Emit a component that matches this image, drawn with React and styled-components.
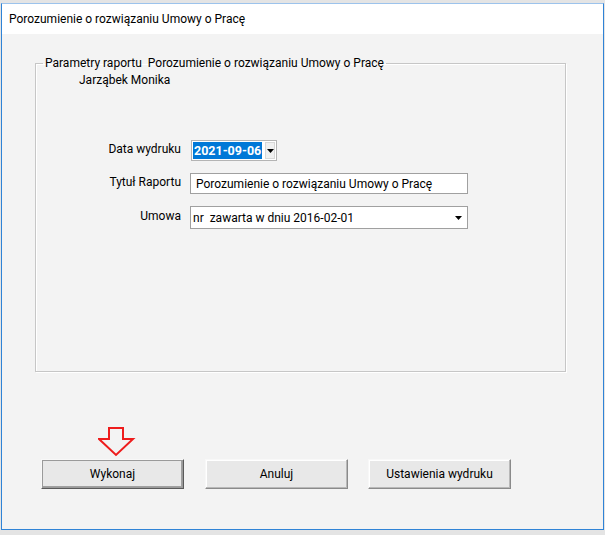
import React from "react";
import styled, { createGlobalStyle } from "styled-components";

const Global = createGlobalStyle`
  html, body { margin: 0; padding: 0; }
  body {
    background: #e4e4e4;
    font-family: Roboto, "Open Sans", sans-serif;
    width: 605px;
    height: 535px;
    overflow: hidden;
  }
  #root { padding-top: 3px; }
`;

const Window = styled.div`
  margin-left: 1px;
  width: 601px;
  height: 525px;
  border: 1px solid #2f83d6;
  border-top-color: #9cc3ec;
  display: flex;
  flex-direction: column;
  background: #f3f3f3;
`;

const TitleBar = styled.div`
  height: 30px;
  background: #ffffff;
  display: flex;
  align-items: center;
  padding-left: 7px;
  font-size: 12px;
  color: #000;
`;

const Body = styled.div`
  flex: 1;
  display: flex;
  flex-direction: column;
  padding: 21px 0 0 33px;
`;

const GroupBox = styled.fieldset`
  margin: 0;
  width: 531px;
  height: 317px;
  box-sizing: border-box;
  border: 1px solid #c6c6c6;
  box-shadow: inset 1px 1px 0 #ffffff, 1px 1px 0 #ffffff;
  padding: 0;
  font-size: 12px;
  color: #000;
  white-space: nowrap;
`;

const Legend = styled.legend`
  margin-left: 7px;
  padding: 0 2px;
  line-height: 16px;
`;

const Person = styled.div`
  padding-left: 43px;
  line-height: 16px;
  margin-top: 1px;
`;

const Form = styled.div`
  display: grid;
  grid-template-columns: 145px auto;
  column-gap: 9px;
  row-gap: 12px;
  margin-top: 52px;
  align-items: center;
`;

const Label = styled.div`
  text-align: right;
  padding-bottom: 3px;
`;

const DateBox = styled.div`
  width: 86px;
  height: 21px;
  box-sizing: border-box;
  border: 1px solid #b4b4b4;
  background: #fff;
  display: flex;
  align-items: center;
  padding: 0 0 0 1px;
  margin-left: 1px;
`;

const Selected = styled.span`
  background: #0078d7;
  color: #fff;
  font-weight: 700;
  font-size: 12.5px;
  line-height: 17px;
  padding: 0 1px;
  margin-right: 3px;
  flex: 1;
`;

const ArrowBtn = styled.div`
  width: ${(p) => p.$w || 11}px;
  align-self: stretch;
  margin: ${(p) => (p.$flat ? "0" : "1px 1px 1px 0")};
  box-sizing: border-box;
  background: ${(p) => (p.$flat ? "transparent" : "#f0f0f0")};
  border: ${(p) => (p.$flat ? "none" : "1px solid #d8d8d8")};
  display: flex;
  align-items: center;
  justify-content: center;
  svg { display: block; }
`;

const TextInput = styled.div`
  width: 278px;
  height: 21px;
  box-sizing: border-box;
  border: 1px solid #a0a0a0;
  background: #fff;
  display: flex;
  align-items: center;
  padding-left: 5px;
`;

const Select = styled.div`
  width: 278px;
  height: 23px;
  box-sizing: border-box;
  border: 1px solid #a0a0a0;
  background: #fff;
  display: flex;
  align-items: center;
`;

const SelectText = styled.span`
  flex: 1;
  padding-left: 2px;
`;

const Spacer = styled.div`
  flex: 1;
`;

const ButtonArea = styled.div`
  position: relative;
  display: flex;
  gap: 21px;
  padding-left: 6px;
  margin-bottom: 40px;
`;

const Button = styled.button`
  width: 143px;
  height: 30px;
  box-sizing: border-box;
  background: #e8e8e8;
  border: 1px solid;
  border-color: #f8f8f8 ${(p) => (p.$default ? "#5a5a5a" : "#8a8a8a")} ${(p) => (p.$default ? "#5a5a5a" : "#8a8a8a")} #f8f8f8;
  box-shadow: ${(p) =>
    p.$default
      ? "inset 0 0 0 1px #9a9a9a, inset -1px -1px 0 1px #a0a0a0"
      : "inset -1px -1px 0 #b8b8b8, inset 1px 1px 0 #ffffff"};
  font-family: Roboto, "Open Sans", sans-serif;
  font-size: 12px;
  color: #000;
  padding: 0;
  margin-left: ${(p) => p.$ml || 0}px;
`;

const PointerArrow = styled.svg`
  position: absolute;
  left: 63px;
  top: -32px;
`;

const Caret = () => (
  <svg width="7" height="4" viewBox="0 0 7 4">
    <path d="M0 0 H7 L3.5 4 Z" fill="#000" />
  </svg>
);

export default function App() {
  return (
    <>
      <Global />
      <Window>
        <TitleBar>Porozumienie o rozwiązaniu Umowy o Pracę</TitleBar>
        <Body>
          <GroupBox>
            <Legend>Parametry raportu&nbsp; Porozumienie o rozwiązaniu Umowy o Pracę</Legend>
            <Person>Jarząbek Monika</Person>
            <Form>
              <Label>Data wydruku</Label>
              <div>
                <DateBox>
                  <Selected>2021-09-06</Selected>
                  <ArrowBtn>
                    <Caret />
                  </ArrowBtn>
                </DateBox>
              </div>
              <Label>Tytuł Raportu</Label>
              <TextInput>Porozumienie o rozwiązaniu Umowy o Pracę</TextInput>
              <Label>Umowa</Label>
              <Select>
                <SelectText>nr&nbsp; zawarta w dniu 2016-02-01</SelectText>
                <ArrowBtn $flat $w={18}>
                  <Caret />
                </ArrowBtn>
              </Select>
            </Form>
          </GroupBox>
          <Spacer />
          <ButtonArea>
            <PointerArrow width="38" height="30" viewBox="0 0 38 30">
              <path
                d="M11 1 H25 V12 H35 L18 28 L1 12 H11 Z"
                fill="none"
                stroke="#ee1c1c"
                strokeWidth="2"
                strokeLinejoin="miter"
              />
            </PointerArrow>
            <Button $default>Wykonaj</Button>
            <Button>Anuluj</Button>
            <Button $ml={-1}>Ustawienia wydruku</Button>
          </ButtonArea>
        </Body>
      </Window>
    </>
  );
}
